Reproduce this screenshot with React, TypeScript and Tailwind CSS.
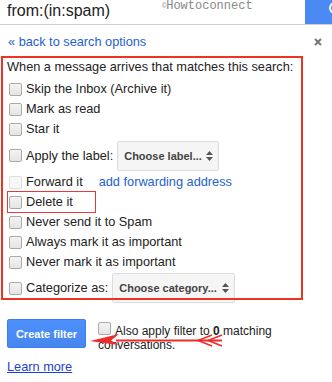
const ACTIONS_TOP = ["Skip the Inbox (Archive it)", "Mark as read", "Star it"];
const ACTIONS_MID = [
  "Never send it to Spam",
  "Always mark it as important",
  "Never mark it as important",
];

function Box({ disabled = false }: { disabled?: boolean }) {
  return (
    <span
      className={
        disabled
          ? "mr-[4px] inline-block h-[13px] w-[13px] shrink-0 rounded-[2px] border border-[#dedede] bg-[#f7f7f7]"
          : "mr-[4px] inline-block h-[13px] w-[13px] shrink-0 rounded-[2px] border border-[#a9a9a9] bg-gradient-to-b from-[#f4f4f4] to-[#e4e4e4]"
      }
    />
  );
}

function Arrows() {
  return (
    <svg width="7" height="10" viewBox="0 0 7 10" className="shrink-0">
      <path d="M0 4 L3.5 0 L7 4 Z M0 6 L3.5 10 L7 6 Z" fill="#555" />
    </svg>
  );
}

function Select({ label, width }: { label: string; width: string }) {
  return (
    <div
      className={`ml-[4px] flex h-[30px] items-center justify-between rounded-[2px] border border-[#dcdcdc] bg-[#f5f5f5] pl-[6px] pr-[5px] text-[11px] font-bold text-[#444] ${width}`}
    >
      <span>{label}</span>
      <Arrows />
    </div>
  );
}

function Row({ label }: { label: string }) {
  return (
    <div className="flex h-[20px] items-center pl-[2px]">
      <Box />
      <span>{label}</span>
    </div>
  );
}

export default function App() {
  return (
    <div className="relative h-[382px] w-[332px] overflow-hidden bg-white font-['Liberation_Sans',Arial,sans-serif] text-[12.75px] leading-[16px] text-[#222]">
      {/* search bar */}
      <div className="flex h-[25px] border-b border-[#cfcfcf]">
        <div className="relative flex-1 pl-[7px] text-[16px] leading-[22px] text-[#222]">
          from:(in:spam)
          <span className="absolute left-[162px] top-0 font-['Liberation_Mono',monospace] text-[12px] leading-[13px] text-[#888]">
            <span className="relative top-[-1px] text-[7px]">©</span>Howtoconnect
          </span>
        </div>
        <div className="h-[24px] w-[27px] overflow-hidden bg-[#4a8af2]">
          <svg width="27" height="24" viewBox="0 0 27 24">
            <circle cx="30" cy="8" r="5" stroke="#fff" strokeWidth="2" fill="none" />
          </svg>
        </div>
      </div>

      {/* back link */}
      <div className="mt-[9px] flex items-center justify-between pl-[8px] pr-[10px]">
        <span className="text-[#2462d2]">« back to search options</span>
        <svg width="8" height="8" viewBox="0 0 8 8">
          <path d="M1 1 L7 7 M7 1 L1 7" stroke="#777" strokeWidth="2" />
        </svg>
      </div>

      {/* filter actions */}
      <div className="mt-[9px] pl-[7px]">
        <div>When a message arrives that matches this search:</div>
        <div className="mt-[4px]">
          {ACTIONS_TOP.map((a) => (
            <Row key={a} label={a} />
          ))}
          <div className="flex h-[33px] items-center pl-[2px]">
            <Box />
            <span>Apply the label:</span>
            <Select label="Choose label..." width="w-[102px]" />
          </div>
          <div className="flex h-[20px] items-center pl-[2px]">
            <Box disabled />
            <span>Forward it</span>
            <span className="ml-[16px] text-[#2462d2]">add forwarding address</span>
          </div>
          <Row label="Delete it" />
          {ACTIONS_MID.map((a) => (
            <Row key={a} label={a} />
          ))}
          <div className="flex h-[32px] items-center pl-[2px]">
            <Box />
            <span>Categorize as:</span>
            <Select label="Choose category..." width="w-[123px]" />
          </div>
        </div>
      </div>

      {/* create filter */}
      <div className="mt-[15px] flex items-start pl-[7px]">
        <button className="h-[29px] w-[79px] rounded-[2px] border border-[#3b7ef0] bg-gradient-to-b from-[#4d90fe] to-[#4787ed] text-[11px] font-bold text-white">
          Create filter
        </button>
        <div className="ml-[12px] w-[200px] pt-[5px] text-[12px] leading-[14px] text-[#222]">
          <span className="float-left mt-[-2px] mr-[4px] inline-block h-[13px] w-[13px] rounded-[2px] border border-[#a9a9a9] bg-gradient-to-b from-[#f4f4f4] to-[#e4e4e4]" />
          Also apply filter to <b>0</b> matching conversations.
        </div>
      </div>
      <div className="mt-[7px] pl-[7px]">
        <span className="text-[#1c3fd4] underline">Learn more</span>
      </div>

      {/* annotations */}
      <div className="pointer-events-none absolute left-[1px] top-[56px] h-[244px] w-[302px] border-2 border-[#ee3322]" />
      <div className="pointer-events-none absolute left-[7px] top-[191px] h-[22px] w-[89px] border-[1.5px] border-[#e33a3a]" />
      <svg
        className="pointer-events-none absolute left-0 top-0"
        width="332"
        height="382"
        viewBox="0 0 332 382"
      >
        <path d="M116 340.5 H222" stroke="#ef2b2b" strokeWidth="2" />
        <polygon points="90,341 119,334 111,340.5 119,345" fill="#ef2b2b" />
        <polyline points="212,335 198,340.5 212,346" stroke="#ef2b2b" strokeWidth="1.5" fill="none" />
        <polyline points="222,335 208,340.5 222,346" stroke="#ef2b2b" strokeWidth="1.5" fill="none" />
      </svg>
    </div>
  );
}
